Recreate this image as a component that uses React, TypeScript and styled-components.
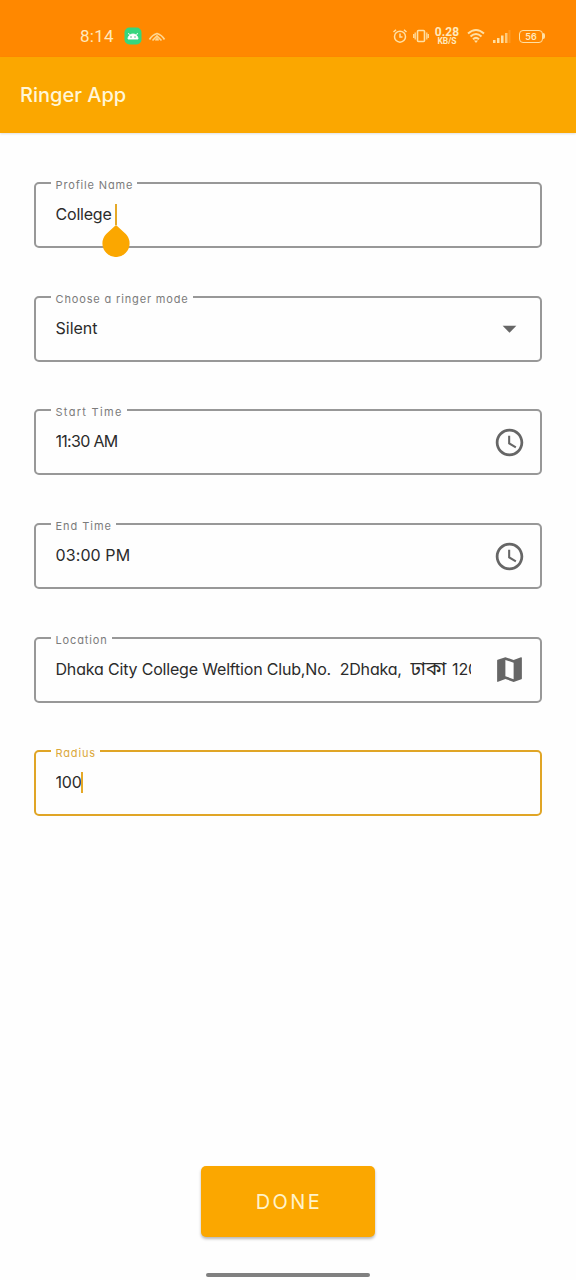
import React from "react";
import styled, { createGlobalStyle } from "styled-components";

const GlobalStyle = createGlobalStyle`
  * { box-sizing: border-box; }
  body {
    margin: 0;
    background: #fefefe;
    font-family: Inter, "Noto Sans", "Noto Sans Bengali", sans-serif;
    font-feature-settings: "cv11" 1;
  }
`;

const Screen = styled.div`
  display: flex;
  flex-direction: column;
  width: 576px;
  height: 1280px;
  overflow: hidden;
`;

const StatusBar = styled.div`
  display: flex;
  align-items: center;
  height: 57px;
  padding: 15px 31px 0 80px;
  background: #ff8800;
  color: #ffe9bd;
`;

const Clock = styled.span`
  width: 44px;
  font-family: Roboto, sans-serif;
  font-size: 17px;
  line-height: 20px;
  letter-spacing: 0.25px;
`;

const StatusIcon = styled.svg<{ $gap?: number }>`
  flex: none;
  display: block;
  margin-left: ${(p) => p.$gap ?? 0}px;
`;

const Spacer = styled.div`
  flex: 1;
`;

const NetSpeed = styled.div`
  display: flex;
  flex-direction: column;
  align-items: center;
  width: 26px;
  margin-left: 5px;
  font-family: Roboto, sans-serif;
  font-weight: 700;
`;

const Speed = styled.span`
  font-size: 12px;
  line-height: 10px;
  letter-spacing: 0.1px;
`;

const SpeedUnit = styled.span`
  font-size: 8.5px;
  line-height: 8px;
`;

const Battery = styled.div`
  display: flex;
  align-items: center;
  margin-left: 8px;
`;

const BatteryBody = styled.span`
  width: 24px;
  height: 13px;
  border: 1.5px solid #ffe0a4;
  border-radius: 4px;
  font-size: 9px;
  font-weight: 600;
  line-height: 11px;
  text-align: center;
`;

const BatteryTip = styled.span`
  width: 2px;
  height: 6px;
  border-radius: 0 2px 2px 0;
  background: #ffe0a4;
`;

const AppBar = styled.header`
  display: flex;
  align-items: center;
  height: 76px;
  padding: 0 20px;
  background: #fba700;
  box-shadow: 0 1px 2px rgba(0, 0, 0, 0.12);
`;

const Title = styled.h1`
  margin: 0;
  font-size: 20px;
  font-weight: 450;
  line-height: 24px;
  letter-spacing: 0;
  color: #fff6d8;
`;

const Form = styled.form`
  display: flex;
  flex-direction: column;
  gap: 41.6px;
  padding: 43.3px 34px 0;
`;

const Outline = styled.fieldset<{ $active?: boolean }>`
  height: 72px;
  min-width: 0;
  margin: 0;
  padding: 0 14px 0 15px;
  border: 2px solid ${(p) => (p.$active ? "#e0a526" : "#989898")};
  border-radius: 5px;
  color: ${(p) => (p.$active ? "#dba83a" : "#7b7b7b")};
`;

const Label = styled.legend<{ $spacing: number }>`
  height: 14px;
  padding: 2px 4px 0 4.5px;
  font-size: 11px;
  line-height: 14px;
  letter-spacing: ${(p) => p.$spacing}px;
  white-space: nowrap;
`;

const Content = styled.div`
  display: flex;
  align-items: center;
  height: 48px;
  padding-left: 4.5px;
`;

const Value = styled.div<{ $spacing: number }>`
  flex: 0 1 415px;
  min-width: 0;
  height: 24px;
  overflow: hidden;
  font-size: 16px;
  line-height: 24px;
  letter-spacing: ${(p) => p.$spacing}px;
  white-space: pre;
  color: #2b2b2b;
`;

const Bengali = styled.span`
  font-size: 19px;
  font-weight: 400;
  line-height: 20px;
  letter-spacing: 0;
  margin-right: 1.5px;
`;

const Caret = styled.span<{ $gap: number }>`
  width: 2.5px;
  height: 21px;
  margin: 2px 0 0 ${(p) => p.$gap}px;
  background: #e5a928;
`;

const CaretWrap = styled.span`
  position: relative;
  display: flex;
`;

const Handle = styled.svg`
  position: absolute;
  left: -10px;
  top: 23px;
`;

const TrailingIcon = styled.svg`
  flex: none;
  display: block;
  margin-left: auto;
  margin-top: 2px;
  fill: #666;
`;

const Footer = styled.footer`
  display: flex;
  flex-direction: column;
  align-items: center;
  margin-top: auto;
  padding-bottom: 3px;
`;

const DoneButton = styled.button`
  width: 174px;
  height: 71px;
  margin-bottom: 36px;
  padding: 0 0 0 2px;
  border: 0;
  border-radius: 5px;
  background: #fba700;
  box-shadow: 0 2px 3px rgba(0, 0, 0, 0.28);
  font-family: inherit;
  font-size: 20px;
  font-weight: 400;
  letter-spacing: 2.4px;
  color: #fff3cb;
`;

const HomeIndicator = styled.div`
  width: 164px;
  height: 4px;
  border-radius: 2px;
  background: #808080;
`;

const paths = {
  dropdown: "M7 10l5 5 5-5z",
  clock:
    "M11.99 2C6.47 2 2 6.48 2 12s4.47 10 9.99 10C17.52 22 22 17.52 22 12S17.52 2 11.99 2zM12 20c-4.42 0-8-3.58-8-8s3.58-8 8-8 8 3.58 8 8-3.58 8-8 8zm.5-13H11v6l5.25 3.15.75-1.23-4.5-2.67z",
  map: "M20.5 3l-.16.03L15 5.1 9 3 3.36 4.9c-.21.07-.36.25-.36.48V20.5c0 .28.22.5.5.5l.16-.03L9 18.9l6 2.1 5.64-1.9c.21-.07.36-.25.36-.48V3.5c0-.28-.22-.5-.5-.5zM15 19l-6-2.11V5l6 2.11V19z",
};

interface FieldProps {
  label: string;
  labelSpacing?: number;
  value: React.ReactNode;
  spacing?: number;
  icon?: keyof typeof paths;
  active?: boolean;
  caret?: number;
  handle?: boolean;
}

function Field({ label, labelSpacing = 0.85, value, spacing = 0, icon, active, caret, handle }: FieldProps) {
  return (
    <Outline $active={active}>
      <Label $spacing={labelSpacing}>{label}</Label>
      <Content>
        {caret === undefined ? (
          <Value $spacing={spacing}>{value}</Value>
        ) : (
          <CaretWrap>
            <Value $spacing={spacing}>{value}</Value>
            <CaretWrap>
              <Caret $gap={caret} />
              {handle && (
                <Handle width="28" height="32" viewBox="0 0 28 32">
                  <path d="M14 0L23.8 9A13.6 13.6 0 1 1 4.2 9Z" fill="#fba700" />
                </Handle>
              )}
            </CaretWrap>
          </CaretWrap>
        )}
        {icon && (
          <TrailingIcon width="33" height="33" viewBox="0 0 24 24">
            <path d={paths[icon]} />
          </TrailingIcon>
        )}
      </Content>
    </Outline>
  );
}

export default function App() {
  return (
    <Screen>
      <GlobalStyle />
      <StatusBar>
        <Clock>8:14</Clock>
        <StatusIcon width="18" height="18" viewBox="0 0 18 18">
          <rect x="0.5" y="0.5" width="17" height="17" rx="5" fill="#36d67d" />
          <path d="M4 12a5 5 0 0 1 10 0zM5.5 8L4.4 6M12.5 8l1.1-2" fill="#fff" stroke="#fff" strokeWidth="0.9" />
          <circle cx="7" cy="10" r="0.7" fill="#36a866" />
          <circle cx="11" cy="10" r="0.7" fill="#36a866" />
        </StatusIcon>
        <StatusIcon $gap={6} width="18" height="14" viewBox="0 0 18 14" fill="none" stroke="#ffd792" strokeWidth="1.7">
          <path d="M1.5 10.5Q4 6 9 4.5Q14 6 16.5 10.5M4.5 11.5L9 7l4.5 4.5M7.5 11.5L9 9.8l1.5 1.7" />
        </StatusIcon>
        <Spacer />
        <StatusIcon width="16" height="16" viewBox="0 0 16 16" fill="none" stroke="#ffe0a4" strokeWidth="1.5">
          <circle cx="8" cy="8.7" r="5.5" />
          <path d="M8 5.5v3.5h2.5M1.5 4L4 1.8M14.5 4L12 1.8" />
        </StatusIcon>
        <StatusIcon $gap={5} width="16" height="16" viewBox="0 0 16 16" fill="none" stroke="#ffe0a4" strokeWidth="1.6">
          <rect x="4.5" y="2.5" width="7" height="11" rx="1" />
          <path d="M2.2 4.5v7M13.8 4.5v7M0.7 6v4M15.3 6v4" strokeWidth="1.2" />
        </StatusIcon>
        <NetSpeed>
          <Speed>0.28</Speed>
          <SpeedUnit>KB/S</SpeedUnit>
        </NetSpeed>
        <StatusIcon $gap={7} width="18" height="16" viewBox="0 0 18 16" fill="none" stroke="#ffe0a4" strokeWidth="2">
          <path d="M1 5.5Q9-1.5 17 5.5M3.5 8.5Q9 3.5 14.5 8.5M6 11.3Q9 8.5 12 11.3" />
          <path d="M7 12.5h4L9 15z" fill="#ffe0a4" stroke="none" />
        </StatusIcon>
        <StatusIcon $gap={8} width="18" height="14" viewBox="0 0 18 14" fill="#ffe0a4">
          <rect x="0" y="11" width="2.5" height="3" />
          <rect x="4" y="9" width="2.5" height="5" />
          <rect x="8" y="6.5" width="2.5" height="7.5" />
          <rect x="12" y="4" width="2.5" height="10" opacity="0.75" />
          <rect x="15.5" y="1" width="2" height="13" opacity="0.2" />
        </StatusIcon>
        <Battery>
          <BatteryBody>56</BatteryBody>
          <BatteryTip />
        </Battery>
      </StatusBar>
      <AppBar>
        <Title>Ringer App</Title>
      </AppBar>
      <Form>
        <Field label="Profile Name" value="College" spacing={-0.2} caret={3} handle />
        <Field label="Choose a ringer mode" value="Silent" icon="dropdown" />
        <Field label="Start Time" labelSpacing={1.3} value="11:30 AM" spacing={-0.7} icon="clock" />
        <Field label="End Time" labelSpacing={0.95} value="03:00 PM" spacing={0.1} icon="clock" />
        <Field
          label="Location"
          value={
            <>
              Dhaka City College Welftion Club,No.{"  "}2Dhaka,{"  "}
              <Bengali>ঢাকা</Bengali> 1205
            </>
          }
          spacing={-0.18}
          icon="map"
        />
        <Field label="Radius" value="100" spacing={-0.2} active caret={-1} />
      </Form>
      <Footer>
        <DoneButton type="button">DONE</DoneButton>
        <HomeIndicator />
      </Footer>
    </Screen>
  );
}
